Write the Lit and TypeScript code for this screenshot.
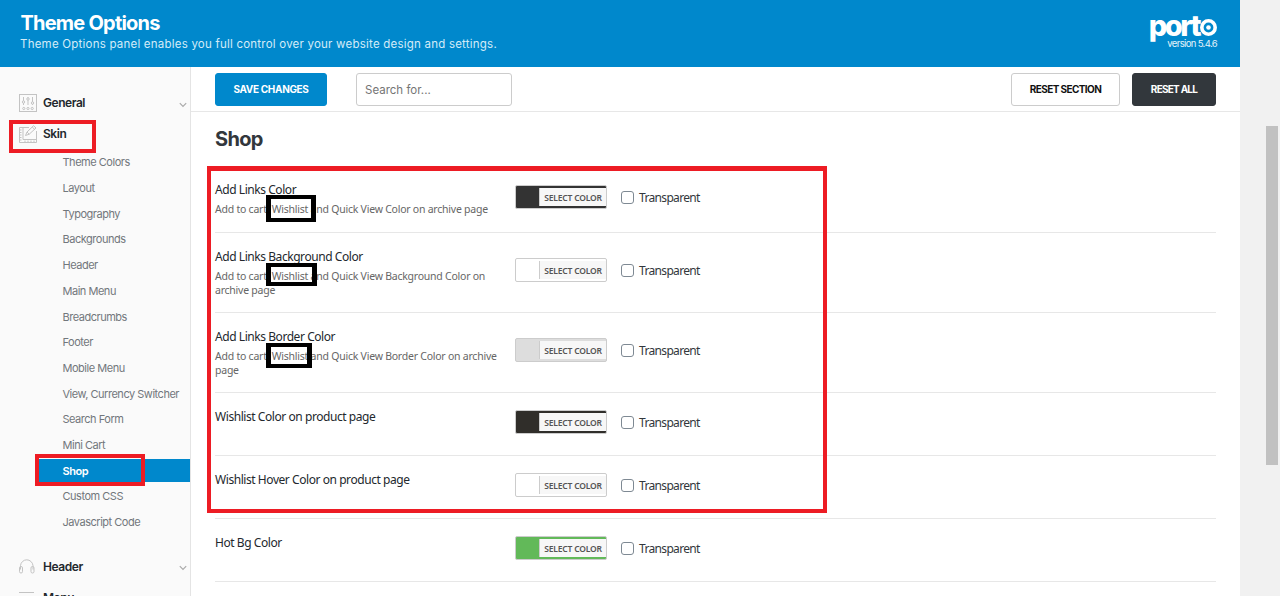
import { LitElement, html, css, svg } from "lit";
import { customElement } from "lit/decorators.js";
import { classMap } from "lit/directives/class-map.js";
import { styleMap } from "lit/directives/style-map.js";

const MENU = [
  "Theme Colors", "Layout", "Typography", "Backgrounds", "Header", "Main Menu",
  "Breadcrumbs", "Footer", "Mobile Menu", "View, Currency Switcher", "Search Form",
  "Mini Cart", "Shop", "Custom CSS", "Javascript Code",
];

interface Field { title: string; note?: string; color: string; height: number }

const FIELDS: Field[] = [
  { title: "Add Links Color", note: "Add to cart, Wishlist and Quick View Color on archive page", color: "#333333", height: 67 },
  { title: "Add Links Background Color", note: "Add to cart, Wishlist and Quick View Background Color on archive page", color: "#ffffff", height: 80 },
  { title: "Add Links Border Color", note: "Add to cart, Wishlist and Quick View Border Color on archive page", color: "#dddddd", height: 80 },
  { title: "Wishlist Color on product page", color: "#302e2a", height: 63 },
  { title: "Wishlist Hover Color on product page", color: "#ffffff", height: 63 },
  { title: "Hot Bg Color", color: "#62b959", height: 63 },
];

const chevron = html`<svg class="chev" width="8" height="6" viewBox="0 0 8 6" fill="none" stroke="#a9a9a9" stroke-width="1.2"><path d="M.8 1.2 4 4.4 7.2 1.2"/></svg>`;

const icon = (body: unknown) => html`<svg class="ico" width="18" height="18" viewBox="0 0 18 18" fill="none" stroke="#c3c3c3" stroke-width="1">${body}</svg>`;

const sliders = svg`<rect x=".5" y=".5" width="17" height="17"/><path d="M4.5 3v8M9 3v8M13.500 3v8"/><circle cx="4.500" cy="8" r="1.200" fill="#fafafa"/><circle cx="9" cy="5" r="1.200" fill="#fafafa"/><circle cx="13.500" cy="9" r="1.200" fill="#fafafa"/><circle cx="4.800" cy="14.500" r="1.100"/><circle cx="9" cy="14.500" r="1.100"/><circle cx="13.200" cy="14.500" r="1.100"/>`;
const sketch = svg`<path d="M10 2.500H.5v15h17V6"/><path d="M4 2.500v12h13.500M.5 5H2.500M.5 7.500H2.500M.5 10H2.500M.5 12.500H2.500M.5 15H2.500M6 15.500v2M9 15.500v2M12 15.500v2M15 15.500v2"/><path d="M6.500 10.500 8 7 14.600.7 17 3 10.200 9.200Z M8 7 10.200 9.200M13.200 2 15.600 4.300" fill="#fafafa"/>`;
const phones = svg`<path d="M1.500 12.500V8.500a6.300 6.500 0 0 1 12.500 0v4"/><rect x=".5" y="9.500" width="3" height="6.500" rx="1.400"/><rect x="12" y="9.500" width="3" height="6.500" rx="1.400"/>`;
const bars = svg`<path d="M0 4.500h15M0 9.500h15"/>`;

@customElement("app-root")
export class AppRoot extends LitElement {
  static styles = css`
    :host { display: block; position: relative; width: 1280px; height: 596px; overflow: hidden; background: #f1f1f1;
      font-family: Inter, "Liberation Sans", sans-serif; color: #32373c; white-space: nowrap; }
    * { box-sizing: border-box; }
    .page { display: flex; height: 596px; justify-content: space-between; }
    .panel { width: 1240px; background: #fff; display: flex; flex-direction: column; }
    header { height: 67px; flex: none; background: #0088cc; color: #fff; display: flex; justify-content: space-between; padding: 11px 23px 0 20px; }
    h1 { margin: 0; font-size: 20px; line-height: 24px; font-weight: 700; letter-spacing: -.78px; padding-left: .5px; }
    .tag { font-size: 11.500px; line-height: 17px; padding-top: 1px; color: #d4ecf8; letter-spacing: .22px; }
    .brand { display: flex; flex-direction: column; align-items: flex-end; }
    .logo { font-weight: 800; font-size: 29px; line-height: 27px; height: 27px; letter-spacing: -2.5px; display: flex; align-items: baseline; padding-top: 1px; }
    .logo svg { margin-left: 1px; margin-bottom: -1px; }
    .ver { font-size: 9.500px; line-height: 10px; margin-top: 1px; letter-spacing: -.64px; color: #e5f4fb; }
    .body { flex: 1; display: flex; min-height: 0; }
    nav { width: 191px; border-right: 1px solid #e4e4e4; background: #fafafa; padding-top: 20px; flex: none; overflow: hidden; }
    .top { display: flex; align-items: center; height: 31px; padding: 0 3px 0 19px; font-size: 12px; font-weight: 600; letter-spacing: -.45px; color: #23282d; }
    .top .ico { width: 18px; margin-right: 6px; overflow: visible; }
    .top .chev { margin-left: auto; margin-top: 4px; }
    ul { list-style: none; margin: 0 0 16px; padding: 0; }
    li { height: 25.710px; display: flex; align-items: center; padding-left: 39px; }
    .item { flex: 1; height: 23px; line-height: 24px; padding-left: 23.500px; font-size: 11px; letter-spacing: -.48px; color: #72777c; }
    .item.active { background: #0088cc; color: #fff; font-weight: 600; }
    main { flex: 1; min-width: 0; display: flex; flex-direction: column; }
    .bar { height: 45px; border-bottom: 1px solid #e7e7e7; flex: none; display: flex; align-items: center; padding: 0 24px; }
    .btn { height: 33px; border-radius: 3px; font: inherit; font-size: 10px; font-weight: 700; letter-spacing: -.32px; padding: 0; border: 1px solid #ccc; background: #fff; color: #111; }
    .save { width: 112px; background: #0088cc; border-color: #0088cc; color: #fff; }
    .find { width: 156px; height: 33px; margin-left: 29px; border: 1px solid #ccc; border-radius: 3px; padding: 1px 8px 0; font: inherit; font-size: 11.500px; background: #fff; }
    .find::placeholder { color: #757575; opacity: 1; }
    .section { width: 109px; margin-left: auto; letter-spacing: -.6px; }
    .all { width: 84px; margin-left: 12px; background: #32373c; border-color: #32373c; color: #fff; letter-spacing: -.75px; }
    .content { padding: 0 24px; font-family: "Noto Sans", sans-serif; }
    h2 { margin: 0; height: 54px; font: 700 20px/55px Inter, sans-serif; letter-spacing: -.7px; color: #32373c; }
    .row { display: flex; border-bottom: 1px solid #e7e7e7; }
    .text { width: 299.500px; padding: 14px 0 0; }
    .name { font-size: 12px; line-height: 20px; color: #23282d; letter-spacing: -.44px; }
    .note { font-size: 10.500px; line-height: 14px; color: #666; white-space: normal; padding-top: 2px; letter-spacing: -.235px; width: 286px; }
    .ctl { display: flex; align-items: center; height: 24px; margin-top: 25px; }
    .row.plain .ctl { margin-top: 17px; }
    .row.first .ctl { margin-top: 19px; }
    .swatch { width: 92.500px; height: 24px; border: 1px solid #ccc; border-radius: 2px; display: flex; align-items: center; justify-content: flex-end; }
    .pick { width: 67px; height: 18px; line-height: 19px; background: #f7f7f7; border-left: 1px solid #ccc; color: #555; font-size: 8.500px; font-weight: 600; text-align: center; letter-spacing: -.2px; }
    .check { width: 13px; height: 13px; margin: 0 5.500px 0 13.500px; border: 1px solid #7e8993; border-radius: 3px; background: #fff; }
    .label { font-size: 12px; line-height: 24px; padding-top: 1px; color: #32373c; letter-spacing: -.66px; }
    .scroll { width: 14px; padding: 126px 2px 0 0; }
    .thumb { height: 339px; background: #c1c1c1; }
    .mark { position: absolute; border: 4px solid #ed1c24; }
    .m1 { left: 9px; top: 120px; width: 87px; height: 33px; }
    .m2 { left: 35px; top: 454px; width: 110px; height: 32px; }
    .m3 { left: 207px; top: 166px; width: 620px; height: 347px; border-width: 5px 4px 4px; }
    .black { border: solid #000; border-width: 4px 5px; }
    .m4 { left: 266px; top: 195px; width: 50px; height: 27px; }
    .m5 { left: 266px; top: 263px; width: 51px; height: 23px; }
    .m6 { left: 266px; top: 343px; width: 46px; height: 25px; }
  `;

  private field(f: Field, i: number) {
    return html`<div class=${classMap({ row: true, first: i === 0, plain: !f.note })} style=${styleMap({ height: `${f.height}px` })}>
      <div class="text"><div class="name">${f.title}</div>${f.note ? html`<div class="note">${f.note}</div>` : null}</div>
      <div class="ctl">
        <div class="swatch" style=${styleMap({ background: f.color })}><span class="pick">SELECT COLOR</span></div>
        <span class="check"></span><span class="label">Transparent</span>
      </div>
    </div>`;
  }

  render() {
    return html`<div class="page">
      <div class="panel">
        <header>
          <div><h1><span>Theme Options</span></h1><div class="tag"><span>Theme Options panel enables you full control over your website design and settings.</span></div></div>
          <div class="brand">
            <div class="logo"><span>port</span><svg width="17" height="17" viewBox="0 0 17 17"><circle cx="8.500" cy="8.500" r="6.700" fill="none" stroke="#fff" stroke-width="3.600"/><circle cx="8.500" cy="8.500" r="2.300" fill="#fff"/></svg></div>
            <div class="ver">version 5.4.6</div>
          </div>
        </header>
        <div class="body">
          <nav>
            <div class="top">${icon(sliders)}<span>General</span>${chevron}</div>
            <div class="top">${icon(sketch)}<span>Skin</span></div>
            <ul>${MENU.map((m) => html`<li><div class=${classMap({ item: true, active: m === "Shop" })}>${m}</div></li>`)}</ul>
            <div class="top">${icon(phones)}<span>Header</span>${chevron}</div>
            <div class="top">${icon(bars)}<span>Menu</span></div>
          </nav>
          <main>
            <div class="bar">
              <button class="btn save">SAVE CHANGES</button>
              <input class="find" placeholder="Search for..." />
              <button class="btn section">RESET SECTION</button>
              <button class="btn all">RESET ALL</button>
            </div>
            <div class="content"><h2>Shop</h2>${FIELDS.map((f, i) => this.field(f, i))}</div>
          </main>
        </div>
      </div>
      <div class="scroll"><div class="thumb"></div></div>
    </div>
    <div class="mark m1"></div><div class="mark m2"></div><div class="mark m3"></div>
    <div class="mark black m4"></div><div class="mark black m5"></div><div class="mark black m6"></div>`;
  }
}
